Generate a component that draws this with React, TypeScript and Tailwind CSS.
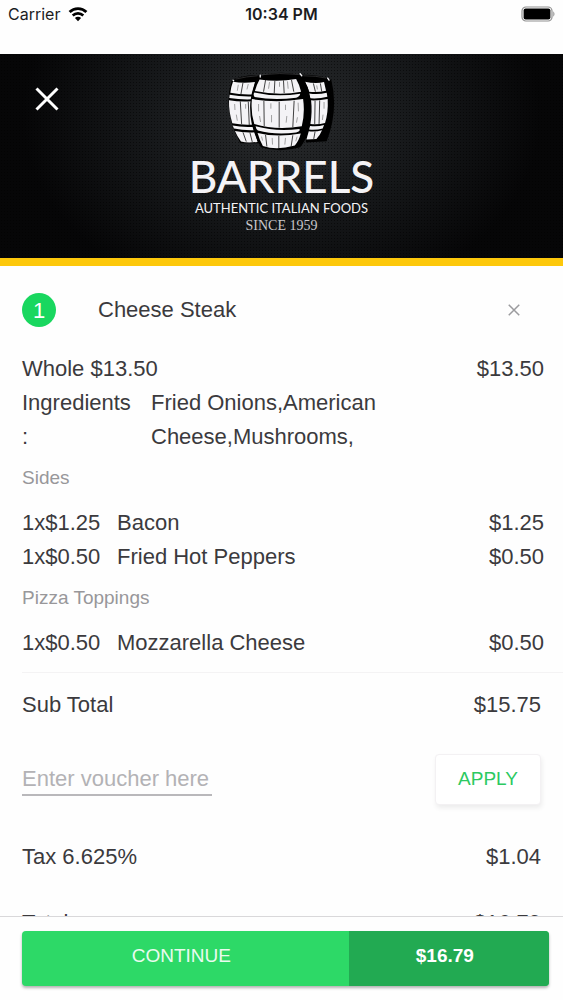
import type { ReactNode } from "react";

type Extra = { qty: string; name: string; price: string };
type ExtraGroup = { title: string; items: Extra[] };

const groups: ExtraGroup[] = [
  {
    title: "Sides",
    items: [
      { qty: "1x$1.25", name: "Bacon", price: "$1.25" },
      { qty: "1x$0.50", name: "Fried Hot Peppers", price: "$0.50" },
    ],
  },
  {
    title: "Pizza Toppings",
    items: [{ qty: "1x$0.50", name: "Mozzarella Cheese", price: "$0.50" }],
  },
];

function WifiIcon() {
  return (
    <svg viewBox="0 0 20 15" className="h-[15px] w-5" fill="none" aria-hidden="true">
      <path d="M1.6 5.1a12 12 0 0 1 16.8 0" stroke="#000" strokeWidth="2.8" />
      <path d="M4.7 8.5a7.6 7.6 0 0 1 10.6 0" stroke="#000" strokeWidth="2.6" />
      <path d="M10 14.2 6.9 11a4.4 4.4 0 0 1 6.2 0z" fill="#000" />
    </svg>
  );
}

function BatteryIcon() {
  return (
    <svg viewBox="0 0 34 16" className="h-4 w-[34px]" fill="none" aria-hidden="true">
      <rect x="1" y="1" width="30" height="14" rx="4" stroke="#8f8f8f" strokeWidth="1.2" />
      <rect x="2.6" y="2.6" width="26.8" height="10.8" rx="2" fill="#000" />
      <path d="M32.3 5.5c1.5.6 1.5 4.4 0 5z" fill="#8f8f8f" />
    </svg>
  );
}

function CloseIcon({ className }: { className: string }) {
  return (
    <svg viewBox="0 0 24 24" className={className} fill="none" stroke="currentColor" aria-hidden="true">
      <path d="M1.5 1.5l21 21M22.5 1.5l-21 21" />
    </svg>
  );
}

function BarrelsLogo() {
  return (
    <svg viewBox="145 30 325 246" className="h-[82px] w-[108px]" aria-hidden="true">
      {/* rear barrels: shadow silhouettes */}
      <path d="M156 62Q190 42 242 46L250 250 182 250Q128 150 156 62z" fill="#000" />
      <path d="M362 44Q420 42 456 60Q478 150 442 244L380 248z" fill="#000" />
      {/* left barrel */}
      <g fill="#f4f3f6">
        <path d="M160 65Q190 71 226 66L218 103Q180 104 152 98Q154 80 160 65z" />
        <path d="M150 104Q182 110 217 109L215 118Q180 119 149 114z" />
        <path d="M148 121Q180 126 214 124Q212 165 220 194Q186 196 158 190Q147 155 148 121z" />
        <path d="M159 197Q186 203 222 201L224 211Q190 212 163 206z" />
        <path d="M166 213Q192 219 226 217L234 246Q204 250 184 245Q173 230 166 213z" />
      </g>
      {/* right barrel */}
      <g fill="#f4f3f6">
        <path d="M376 65Q410 72 434 66L440 92Q414 98 389 95Q386 80 376 65z" />
        <path d="M389 100Q416 104 442 98L444 110Q420 117 393 115z" />
        <path d="M395 121Q420 122 445 117Q447 158 437 189Q416 195 393 192Q399 155 395 121z" />
        <path d="M392 198Q414 201 434 195L430 206Q411 211 389 209z" />
        <path d="M388 214Q410 216 428 211Q421 228 411 237L381 239z" />
      </g>
      {/* front barrel */}
      <path d="M236 50Q300 28 366 46Q398 90 394 160Q390 232 362 262Q300 280 244 262Q208 200 212 130Q216 84 236 50z" fill="#000" />
      <g fill="#f4f3f6">
        <path d="M240 58Q295 66 350 57Q360 74 365 95Q300 108 226 93Q231 74 240 58z" />
        <path d="M224 97Q290 112 362 101Q363 109 350 113Q284 122 225 111Q220 104 224 97z" />
        <path d="M217 117Q290 130 371 117Q377 160 367 199Q290 212 224 192Q213 158 217 117z" />
        <path d="M228 199Q290 216 360 207Q364 213 350 218Q286 226 235 212Q229 207 228 199z" />
        <path d="M234 219Q292 234 364 221Q358 244 346 257Q290 272 250 258Q240 240 234 219z" />
      </g>
      {/* hoop studs and rim highlights */}
      <g fill="none" stroke="#f4f3f6" strokeWidth="4" strokeLinecap="round">
        <path d="M160 60l2 2M242 45v6M362 41l5 6M445 54l4 6" />
      </g>
      <path d="M246 44Q300 37 356 43M168 57Q200 49 234 47M372 47Q412 47 440 54" fill="none" stroke="#3c3c3e" strokeWidth="2" />
      {/* staves */}
      <g fill="none" stroke="#111" strokeWidth="2.4">
        <path d="M258 60l-6 35M286 62l-2 38M312 61l2 38M336 59l7 36" />
        <path d="M253 123l1 75M299 125v78M344 122l-4 80" />
        <path d="M258 225l4 35M298 228v38M340 226l-5 34" />
        <path d="M190 68l-6 34M182 124l4 68M206 125l3 70M190 217l10 28M211 218l7 28" />
        <path d="M402 70l6 25M423 70l4 24M421 121l-2 71M407 122l-1 70M407 215l-4 22" />
      </g>
      {/* wood grain */}
      <g fill="none" stroke="#777" strokeWidth="2">
        <path d="M270 66l-3 20M300 66v14M324 64l2 22M237 132v22M240 168l3 18M274 130v16M276 165v22M318 134v16M322 168l-2 20M356 128l1 26M354 172l-3 16" />
        <path d="M246 230l3 12M278 234l1 20M318 234l-2 20M353 230l-4 14M165 132l1 18M170 164l3 18M198 132v14M176 74l-3 18M206 72l-4 16M434 126v20M431 164l-2 16M412 76l2 12" />
      </g>
    </svg>
  );
}

function Row({ children, price, inset = false }: { children: ReactNode; price: string; inset?: boolean }) {
  return (
    <div className={inset ? "flex justify-between pr-[22px] leading-[34px]" : "flex justify-between pr-[19px] leading-[34px]"}>
      <div className="flex">{children}</div>
      <div>{price}</div>
    </div>
  );
}

export default function App() {
  return (
    <div className="flex h-screen flex-col overflow-hidden bg-[#fefefe] font-['Liberation_Sans',Arial,sans-serif] text-[22px] text-[#3b3a3d]">
      <div className="grid h-[54px] shrink-0 grid-cols-3 items-start px-2 pt-1 font-['Inter',sans-serif] text-base leading-[21px] text-[#1c1c1e]">
        <div className="flex items-center gap-2">
          <span>Carrier</span>
          <WifiIcon />
        </div>
        <div className="text-center font-semibold">10:34 PM</div>
        <div className="flex h-[19px] items-center justify-end">
          <BatteryIcon />
        </div>
      </div>

      <main className="min-h-0 flex-1 overflow-y-auto [scrollbar-width:none]">
        <header className="relative flex h-[212px] flex-col items-center border-b-8 border-[#fdc80b] bg-[#050506] bg-[radial-gradient(circle,rgba(0,0,0,0.5)_1px,transparent_1px),radial-gradient(ellipse_46%_95%_at_50%_30%,#2a2c2e,#17191b_50%,#060607)] bg-[size:3px_3px,100%_100%] pt-4 text-[#f4f3f6]">
          <button type="button" aria-label="Close" className="absolute top-[33px] left-[35px]">
            <CloseIcon className="size-6 stroke-[3] text-white" />
          </button>
          <BarrelsLogo />
          <h1 className="font-['Lato',sans-serif] text-[44px] leading-[48px] font-medium">BARRELS</h1>
          <p className="font-['Lato',sans-serif] text-[13px] leading-4">AUTHENTIC ITALIAN FOODS</p>
          <p className="mt-[2px] font-['Liberation_Serif',serif] text-sm leading-4 text-[#c9c8cb]">SINCE 1959</p>
        </header>

        <section className="pl-[22px]">
          <div className="flex items-center pt-[27px] pr-[43px] pb-[25px]">
            <span className="flex size-[34px] items-center justify-center rounded-full bg-[#19d75f] text-white">1</span>
            <h2 className="ml-[42px] flex-1 leading-[34px]">Cheese Steak</h2>
            <button type="button" aria-label="Remove Cheese Steak">
              <CloseIcon className="size-3 stroke-[3] text-[#9b9b9e]" />
            </button>
          </div>

          <Row price="$13.50">Whole $13.50</Row>
          <div className="flex leading-[34px]">
            <div className="w-[129px] shrink-0">
              Ingredients
              <br />:
            </div>
            <div className="max-w-60">Fried Onions,American Cheese,Mushrooms,</div>
          </div>

          {groups.map((group) => (
            <div key={group.title}>
              <h3 className="mb-1 text-[19px] leading-[48px] text-[#98979a]">{group.title}</h3>
              {group.items.map((item) => (
                <Row key={item.name} price={item.price}>
                  <span className="w-[95px]">{item.qty}</span>
                  <span>{item.name}</span>
                </Row>
              ))}
            </div>
          ))}

          <div className="mt-3 border-t border-[#f4f3f4] pt-[15px]">
            <Row inset price="$15.75">Sub Total</Row>
          </div>

          <form className="mt-8 flex items-center justify-between pr-[22px]" onSubmit={(e) => e.preventDefault()}>
            <input
              type="text"
              aria-label="Enter voucher here"
              placeholder="Enter voucher here"
              className="h-8 w-[190px] border-b-2 border-[#b9b8bb] bg-transparent outline-none placeholder:text-[#b3b2b5]"
            />
            <button
              type="submit"
              className="h-[51px] w-[106px] rounded border border-[#f3f1f3] bg-white text-[19px] text-[#2cc961] shadow-[1px_3px_5px_rgba(0,0,0,0.07)]"
            >
              APPLY
            </button>
          </form>

          <div className="mt-[35px] flex flex-col gap-8 pb-6">
            <Row inset price="$1.04">Tax 6.625%</Row>
            <Row inset price="$16.79">Total</Row>
          </div>
        </section>
      </main>

      <footer className="shrink-0 border-t border-[#d9d8da] bg-[#fefefe] pt-[14px] pr-[14px] pb-[14px] pl-[22px]">
        <button
          type="button"
          className="flex h-[55px] w-full overflow-hidden rounded bg-[#2dd967] text-[19px] leading-[50px] text-[#e9fbef] shadow-[0_2px_3px_rgba(0,0,0,0.3)]"
        >
          <span className="h-full basis-[62%] pr-2">CONTINUE</span>
          <span className="h-full basis-[38%] bg-[#22aa52] pr-2 font-bold text-white">$16.79</span>
        </button>
      </footer>
    </div>
  );
}
